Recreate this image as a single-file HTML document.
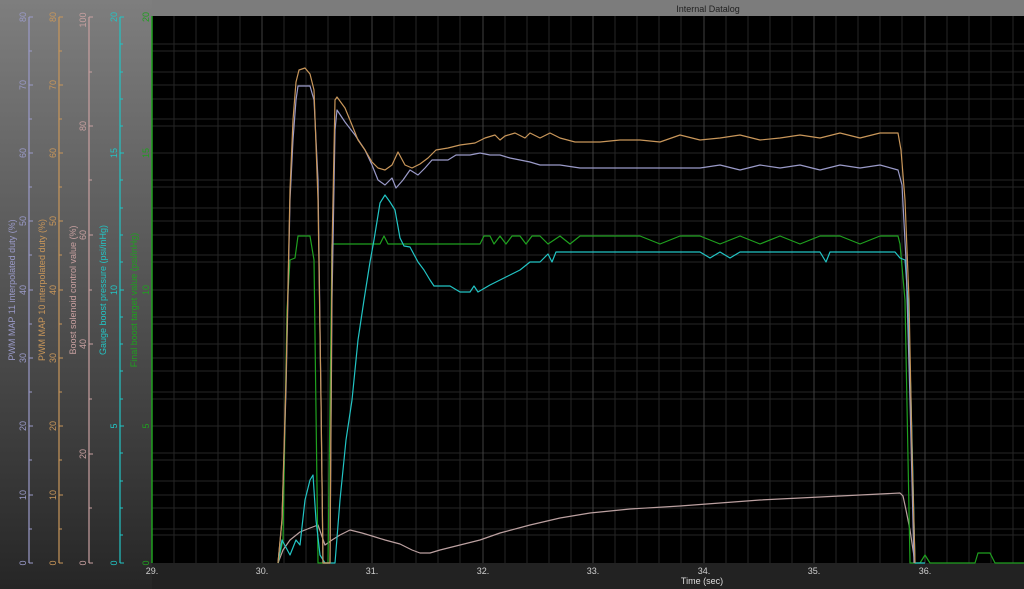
<!DOCTYPE html>
<html><head><style>
html,body{margin:0;padding:0;width:1024px;height:589px;overflow:hidden;background:#222}
svg{display:block;font-family:"Liberation Sans",sans-serif}
</style></head><body>
<svg width="1024" height="589" viewBox="0 0 1024 589" xmlns="http://www.w3.org/2000/svg">
<defs>
<linearGradient id="bg" x1="0" y1="0" x2="0" y2="1">
<stop offset="0" stop-color="#7e7e7e"/><stop offset="0.55" stop-color="#4e4e4e"/><stop offset="1" stop-color="#262626"/>
</linearGradient>
</defs>
<rect x="0" y="0" width="1024" height="589" fill="url(#bg)"/>
<rect x="152" y="0" width="872" height="16" fill="#7c7c7c"/>
<text x="708" y="12" font-size="9" fill="#222" text-anchor="middle">Internal Datalog</text>
<rect x="152" y="16" width="872" height="547" fill="#000"/>
<rect x="152" y="563" width="872" height="26" fill="#222"/>
<g stroke="#262626" stroke-width="1">
<path d="M174 16V563M196 16V563M218 16V563M240 16V563M284 16V563M306 16V563M328 16V563M350 16V563M394 16V563M416 16V563M438 16V563M460 16V563M505 16V563M527 16V563M549 16V563M571 16V563M615 16V563M637 16V563M659 16V563M681 16V563M726 16V563M748 16V563M770 16V563M792 16V563M836 16V563M858 16V563M880 16V563M902 16V563M947 16V563M969 16V563M991 16V563M1013 16V563"/>
<path d="M152 529H1024M152 495H1024M152 460H1024M152 426H1024M152 392H1024M152 358H1024M152 324H1024M152 290H1024M152 255H1024M152 221H1024M152 187H1024M152 153H1024M152 119H1024M152 85H1024M152 51H1024"/>
<path d="M152 535H1024M152 508H1024M152 481H1024M152 453H1024M152 399H1024M152 371H1024M152 344H1024M152 317H1024M152 262H1024M152 235H1024M152 208H1024M152 180H1024M152 126H1024M152 99H1024M152 72H1024M152 44H1024"/>
</g>
<g stroke="#404040" stroke-width="1">
<path d="M262 16V563M372 16V563M483 16V563M593 16V563M704 16V563M814 16V563M925 16V563"/>
</g>
<!-- axes -->
<g font-size="9">
<g stroke="#9a9ac8" fill="#9a9ac8">
<path d="M29 17V563" stroke-width="1.2"/>
<path d="M29 563h4M29 529h3M29 495h4M29 460h3M29 426h4M29 392h3M29 358h4M29 324h3M29 290h4M29 255h3M29 221h4M29 187h3M29 153h4M29 119h3M29 85h4M29 51h3M29 17h4"/>
</g>
<g stroke="#c8965a" fill="#c8965a">
<path d="M59 17V563" stroke-width="1.2"/>
<path d="M59 563h4M59 529h3M59 495h4M59 460h3M59 426h4M59 392h3M59 358h4M59 324h3M59 290h4M59 255h3M59 221h4M59 187h3M59 153h4M59 119h3M59 85h4M59 51h3M59 17h4"/>
</g>
<g stroke="#c8a0a0" fill="#c8a0a0">
<path d="M89 17V563" stroke-width="1.2"/>
<path d="M89 563h4M89 508h3M89 454h4M89 399h3M89 344h4M89 290h3M89 235h4M89 180h3M89 126h4M89 72h3M89 17h4"/>
</g>
<g stroke="#22c4c4" fill="#22c4c4">
<path d="M120 17V563" stroke-width="1.2"/>
<path d="M120 563h4M120 535h3M120 508h3M120 481h3M120 453h3M120 426h4M120 399h3M120 371h3M120 344h3M120 317h3M120 290h4M120 262h3M120 235h3M120 208h3M120 180h3M120 153h4M120 126h3M120 99h3M120 72h3M120 44h3M120 17h4"/>
</g>
<path d="M152 16V563" stroke="#1fa01f" stroke-width="1.5"/>
<g fill="#9a9ac8" text-anchor="middle">
<text transform="translate(26,563) rotate(-90)">0</text><text transform="translate(26,495) rotate(-90)">10</text><text transform="translate(26,426) rotate(-90)">20</text><text transform="translate(26,358) rotate(-90)">30</text><text transform="translate(26,290) rotate(-90)">40</text><text transform="translate(26,221) rotate(-90)">50</text><text transform="translate(26,153) rotate(-90)">60</text><text transform="translate(26,85) rotate(-90)">70</text><text transform="translate(26,17) rotate(-90)">80</text>
<text transform="translate(15,290) rotate(-90)">PWM MAP 11 interpolated duty (%)</text>
</g>
<g fill="#c8965a" text-anchor="middle">
<text transform="translate(56,563) rotate(-90)">0</text><text transform="translate(56,495) rotate(-90)">10</text><text transform="translate(56,426) rotate(-90)">20</text><text transform="translate(56,358) rotate(-90)">30</text><text transform="translate(56,290) rotate(-90)">40</text><text transform="translate(56,221) rotate(-90)">50</text><text transform="translate(56,153) rotate(-90)">60</text><text transform="translate(56,85) rotate(-90)">70</text><text transform="translate(56,17) rotate(-90)">80</text>
<text transform="translate(45,290) rotate(-90)">PWM MAP 10 interpolated duty (%)</text>
</g>
<g fill="#c8a0a0" text-anchor="middle">
<text transform="translate(86,563) rotate(-90)">0</text><text transform="translate(86,454) rotate(-90)">20</text><text transform="translate(86,344) rotate(-90)">40</text><text transform="translate(86,235) rotate(-90)">60</text><text transform="translate(86,126) rotate(-90)">80</text><text transform="translate(86,20) rotate(-90)">100</text>
<text transform="translate(76,290) rotate(-90)">Boost solenoid control value (%)</text>
</g>
<g fill="#22c4c4" text-anchor="middle">
<text transform="translate(117,563) rotate(-90)">0</text><text transform="translate(117,426) rotate(-90)">5</text><text transform="translate(117,290) rotate(-90)">10</text><text transform="translate(117,153) rotate(-90)">15</text><text transform="translate(117,17) rotate(-90)">20</text>
<text transform="translate(106,290) rotate(-90)">Gauge boost pressure (psi/inHg)</text>
</g>
<g fill="#1fa01f" text-anchor="middle">
<text transform="translate(149,563) rotate(-90)">0</text><text transform="translate(149,426) rotate(-90)">5</text><text transform="translate(149,290) rotate(-90)">10</text><text transform="translate(149,153) rotate(-90)">15</text><text transform="translate(149,17) rotate(-90)">20</text>
<text transform="translate(137,300) rotate(-90)">Final boost target value (psi/inHg)</text>
</g>
</g>
<g font-size="9" fill="#cfcfcf" text-anchor="middle">
<text x="152" y="574">29.</text><text x="262" y="574">30.</text><text x="372" y="574">31.</text><text x="483" y="574">32.</text><text x="593" y="574">33.</text><text x="704" y="574">34.</text><text x="814" y="574">35.</text><text x="925" y="574">36.</text>
<text x="702" y="584" fill="#ddd">Time (sec)</text>
</g>
<!-- data -->
<g fill="none" stroke-width="1.2" stroke-linejoin="round">
<polyline stroke="#bba0a0" points="278,563 283,550 290,540 300,532 310,528 318,525 325,545 332,540 340,535 350,530 362,533 372,536 385,540 400,544 412,550 420,553 430,553 440,550 460,545 480,540 500,533 530,525 560,518 590,513 630,509 680,506 720,503 760,500 800,498 840,496 880,494 900,493 903,496 906,510 910,530 915,563"/>
<polyline stroke="#1fa01f" points="278,563 283,540 287,310 290,260 295,258 298,236 310,236 314,260 318,563 328,563 332,244 380,244 384,236 388,244 420,244 480,244 484,236 490,236 494,244 500,236 506,244 512,236 520,236 526,244 532,236 540,236 548,244 560,236 570,244 580,236 600,236 640,236 660,244 680,236 700,236 720,244 740,236 760,244 780,236 800,244 820,236 840,236 860,244 880,236 898,236 900,244 905,300 910,563 920,563 925,555 930,563 975,563 978,553 990,553 995,563 1024,563"/>
<polyline stroke="#22c4c4" points="278,563 282,540 290,555 296,540 300,545 305,500 310,480 313,475 316,520 320,555 325,563 335,563 340,500 346,440 352,400 358,340 364,300 370,262 374,240 380,203 385,195 390,202 395,210 400,238 404,246 410,247 418,262 424,270 430,280 434,286 450,286 460,292 470,292 474,286 478,292 490,285 500,280 510,275 520,270 530,262 540,262 548,254 552,262 556,252 600,252 640,252 700,252 710,258 720,252 730,258 740,252 820,252 826,262 830,252 880,252 895,252 900,258 905,260 908,300 911,400 915,563 925,563"/>
<polyline stroke="#9a9ac8" points="278,563 282,520 286,390 290,200 293,140 296,100 298,86 310,86 314,100 318,180 321,400 323,563 330,563 332,300 335,130 337,110 345,122 355,135 365,150 372,165 378,180 385,185 392,178 396,188 403,180 410,170 418,175 425,168 432,160 440,160 448,160 456,155 470,155 480,153 490,155 500,155 510,158 520,160 530,162 540,165 560,165 580,168 600,168 620,168 660,168 700,168 720,165 740,170 760,165 780,168 800,165 820,170 840,165 860,168 880,165 898,170 902,185 906,260 910,400 914,563"/>
<polyline stroke="#c8965a" points="278,563 282,520 286,380 290,190 293,120 296,82 299,70 305,68 310,74 314,90 318,200 321,400 323,563 330,563 332,250 335,100 337,97 345,108 352,125 358,140 365,150 372,162 378,168 385,170 392,165 398,152 405,165 412,168 420,164 428,158 436,150 448,148 460,145 475,143 485,138 495,135 500,140 505,136 515,133 525,138 530,133 540,138 550,133 560,138 575,142 600,142 620,140 640,140 660,142 680,135 700,140 720,138 740,135 760,140 780,138 800,135 820,138 840,133 860,138 880,133 898,133 901,150 905,200 909,300 912,450 915,563"/>
</g>
</svg>
</body></html>
